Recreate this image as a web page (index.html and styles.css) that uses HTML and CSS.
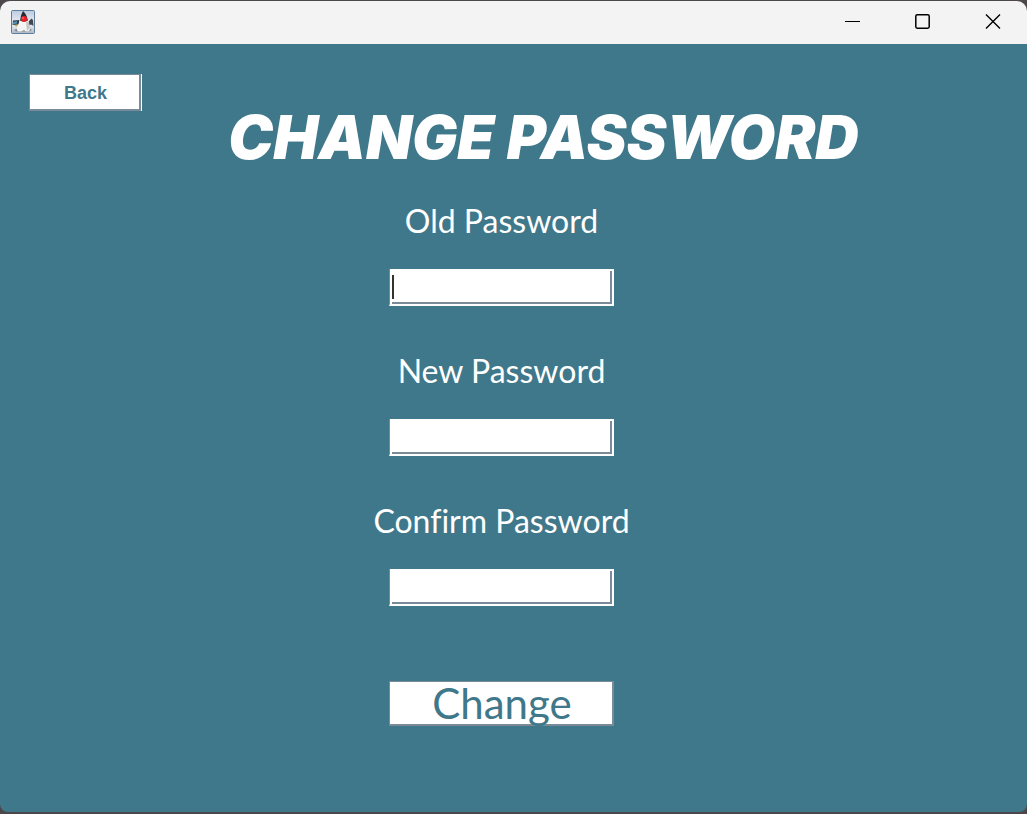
FILE: index.html
```html
<!DOCTYPE html>
<html lang="en">
<head>
<meta charset="utf-8">
<meta name="viewport" content="width=device-width, initial-scale=1">
<title>Change Password</title>
<link rel="stylesheet" href="styles.css">
</head>
<body>
<div class="window">
  <header class="titlebar">
    <svg class="app-icon" viewBox="0 0 24 24" aria-hidden="true">
      <defs>
        <linearGradient id="sky" x1="0" y1="0" x2="0" y2="1">
          <stop offset="0" stop-color="#bccbe0"/><stop offset="0.6" stop-color="#eef1f6"/><stop offset="1" stop-color="#aab6c6"/>
        </linearGradient>
      </defs>
      <rect x="0.5" y="0.5" width="23" height="23" rx="1" fill="url(#sky)" stroke="#5e7e9c"/>
      <path d="M3 20 L8 18 H18 L21 20 L18 21.500 H5Z" fill="#858b91"/>
      <path d="M9 10 L2 10.500 L1.500 15 L8 14.500Z" fill="#343b40"/>
      <path d="M2 12 L6 11 L6 13.500 L2 14.500Z" fill="#4f91bd"/>
      <path d="M3 15.500 L7 14.500 L6 16.500Z" fill="#c8a63a"/>
      <path d="M17 12 L20.500 8.500 L22 10 L22.500 16 L20 14.500 L18 16Z" fill="#43474d"/>
      <path d="M9 8 Q13 6 17 9 L18.500 15 Q20 20 17.500 21.500 Q15 22 13 20 Q9 22.500 6.500 21 Q5 19 7.500 14Z" fill="#f4f4f2"/>
      <path d="M15 12 L17.500 11.500 L19 18 L16 21Z" fill="#c5c7c7"/>
      <path d="M12 1 Q15.500 4 17 10.500 Q13 12.500 9 10.500 Q9.500 5 12 1Z" fill="#292b2e"/>
      <circle cx="13" cy="9" r="3" fill="#e8212a"/>
      <circle cx="12" cy="8" r="1" fill="#ff665f"/>
    </svg>
    <div class="window-controls">
      <button class="control" type="button" aria-label="Minimize">
        <svg viewBox="0 0 16 16"><path d="M0 8.5H15" stroke="#000" fill="none"/></svg>
      </button>
      <button class="control" type="button" aria-label="Maximize">
        <svg viewBox="0 0 16 16"><rect x="0.8" y="1.8" width="13.4" height="13.4" rx="1.4" stroke="#000" stroke-width="1.5" fill="none"/></svg>
      </button>
      <button class="control" type="button" aria-label="Close">
        <svg viewBox="0 0 16 16"><path d="M1 1.5L15 15.5M15 1.5L1 15.5" stroke="#000" stroke-width="1.4" fill="none"/></svg>
      </button>
    </div>
  </header>
  <main class="content">
    <div class="heading-row">
      <button class="back" type="button">Back</button>
      <h1 class="title">CHANGE PASSWORD</h1>
    </div>
    <form class="form">
      <div class="field">
        <label class="label" for="old">Old Password</label>
        <div class="input-wrap">
          <input class="input" id="old" type="password">
          <span class="caret"></span>
        </div>
      </div>
      <div class="field">
        <label class="label" for="new">New Password</label>
        <input class="input" id="new" type="password">
      </div>
      <div class="field">
        <label class="label" for="confirm">Confirm Password</label>
        <input class="input" id="confirm" type="password">
      </div>
      <button class="change" type="button">Change</button>
    </form>
  </main>
</div>
</body>
</html>
```
FILE: styles.css
```css
* { box-sizing: border-box; }

body {
  margin: 0;
  background: #4b474b;
  font-family: Lato, sans-serif;
}

.window {
  display: flex;
  flex-direction: column;
  min-height: 100vh;
  border-top: 1px solid #4b474b;
  border-bottom: 2px solid #4b474b;
}

.titlebar {
  display: flex;
  align-items: center;
  justify-content: space-between;
  height: 43px;
  padding-left: 11px;
  background: #f3f3f3;
  border-radius: 10px 10px 0 0;
}

.app-icon { width: 24px; height: 24px; margin-bottom: 2px; }

.window-controls { display: flex; align-self: stretch; }

.control {
  display: flex;
  align-items: center;
  justify-content: center;
  width: 70px;
  padding: 0 0 3px 2px;
  border: 0;
  background: none;
}

.control svg { width: 16px; height: 16px; }

.content {
  flex: 1;
  padding: 30px 29px;
  background: #3f788a;
  border-radius: 0 0 8px 8px;
}

.heading-row { display: grid; }

.back {
  grid-area: 1 / 1;
  place-self: start;
  width: 112px;
  height: 37px;
  padding: 2px 0 0 2px;
  border: solid #7a8a99;
  border-width: 1px 2px 2px 1px;
  box-shadow: 1px 0 #fff;
  background: #fff;
  color: #3f788a;
  font: bold 18px "Liberation Sans", sans-serif;
}

.title {
  grid-area: 1 / 1;
  margin: 0;
  padding: 32px 0 0 60px;
  color: #fff;
  font: italic 900 60px/62px Inter, sans-serif;
  text-align: center;
}

.form {
  display: flex;
  flex-direction: column;
  align-items: center;
  padding: 29px 24px 0 0;
}

.field {
  display: flex;
  flex-direction: column;
  align-items: center;
  gap: 24px;
  margin-bottom: 41px;
}

.label {
  color: #fff;
  font-size: 32px;
  font-variant-ligatures: none;
  line-height: 48px;
}

.input-wrap { position: relative; display: flex; }

.input {
  width: 225px;
  height: 37px;
  padding: 0 6px;
  border: 2px solid #fff;
  border-left: 1px solid #7a8a99;
  border-top: 0;
  border-radius: 0;
  outline: 0;
  box-shadow: inset 2px 2px #fff, inset -2px -2px #7a8a99;
  background: #fff;
  font: 20px Lato, sans-serif;
}

.caret {
  position: absolute;
  left: 3px;
  top: 6px;
  width: 2px;
  height: 24px;
  background: #333;
}

.change {
  width: 225px;
  height: 45px;
  margin-top: 34px;
  padding: 0 0 0 2px;
  border: solid #7a8a99;
  border-width: 1px 2px 2px 1px;
  background: #fff;
  color: #3f788a;
  font: 42px/42px Lato, sans-serif;
}
```
